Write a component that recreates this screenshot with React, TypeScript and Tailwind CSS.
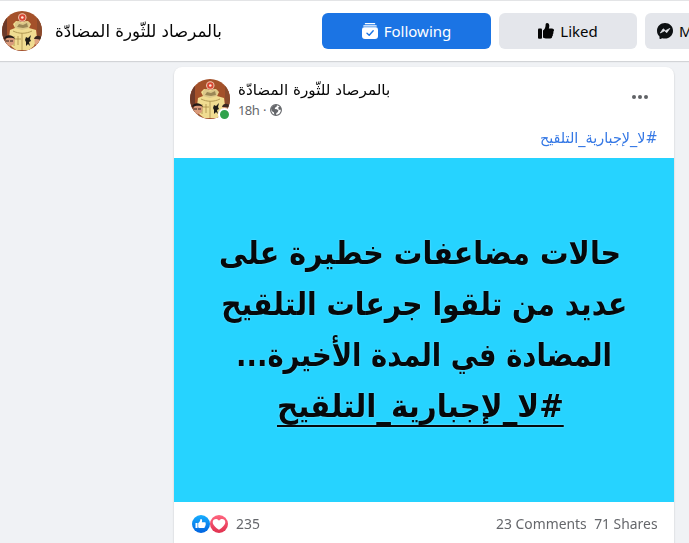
import React from 'react';

const PAGE = 'بالمرصاد للثّورة المضادّة';
const TAG = '#لا_لإجبارية_التلقيح';
const ARABIC = "font-['DejaVu_Sans',sans-serif]";

function Avatar({ id }: { id: string }) {
  return (
    <svg viewBox="0 0 40 40" className="block size-10 shrink-0">
      <defs>
        <clipPath id={id}>
          <circle cx="20" cy="20" r="20" />
        </clipPath>
      </defs>
      <g clipPath={`url(#${id})`}>
        <rect width="40" height="40" fill="#a4512a" />
        <rect width="5" height="40" fill="#6d3a29" />
        <rect x="35" width="5" height="40" fill="#8a4a2c" />
        <path d="M11 13l3-3 6 1 6-1 3 3-2 4 7 2 1 8-3 8-5 4H14l-5-4-2-8 1-8 5-2z" fill="#f0dc91" />
        <path d="M13 12l4-2 3 2 4-2 4 2-1 5-7 2-7-2z" fill="#dcc88a" />
        <path d="M15 16l2-3 4 1 4-2 1 4-5 1z" fill="#9a8756" />
        <path d="M11 20c6 3 13 3 19 0" fill="none" stroke="#b29a55" strokeWidth="1" />
        <path d="M20 22v17M12 25v10M16 25v9M11 28h8" stroke="#a88e4a" strokeWidth=".8" />
        <path d="M24 26l2 1 3-3-1 4 1 2-2 1 1 4-2-2-2 2v-4l-1-2z" fill="#1d1b17" />
        <circle cx="20.3" cy="6.5" r="4.2" fill="#f3c9b4" />
        <circle cx="20.3" cy="6.5" r="3.2" fill="#d94632" />
        <circle cx="20.3" cy="6.5" r="1.3" fill="#ffe9d9" />
        <ellipse cx="8" cy="30" rx="4.5" ry="5" fill="#d99a7a" />
        <path d="M2 28c1-5 9-5 11 0-4-2-7-1-11 0z" fill="#241a18" />
        <path d="M4 30h3m1 0h3" stroke="#352420" strokeWidth="1" />
        <path d="M2 34l6 2 6 4H4z" fill="#2c2525" />
        <ellipse cx="36" cy="30" rx="3.5" ry="5" fill="#e0a482" />
        <path d="M32 28c1-4 6-4 8-1v3c-3-2-5-2-8-2z" fill="#3a2720" />
        <path d="M30 40l3-5 6-1v6z" fill="#54291f" />
      </g>
    </svg>
  );
}

function FollowingIcon() {
  return (
    <svg viewBox="0 0 16 16" className="size-4 shrink-0" fill="none">
      <path d="M3.4.7h9.2" stroke="#fff" strokeWidth="1.3" strokeLinecap="round" />
      <path d="M1.800 2.900h12.400" stroke="#fff" strokeWidth="1.2" strokeLinecap="round" />
      <path d="M2.200 4.300h11.600Q16 4.300 16 6.500V13q0 3-3 3H3q-3 0-3-3V6.500Q0 4.300 2.200 4.300z" fill="#fff" />
      <path d="M5 10.200l2.200 2 4-4.400" stroke="#1b74e4" strokeWidth="1.4" strokeLinecap="round" strokeLinejoin="round" />
    </svg>
  );
}

function ThumbIcon({ className }: { className: string }) {
  return (
    <svg viewBox="0 0 16 16" className={className} fill="currentColor">
      <rect x="0" y="5.500" width="4" height="10.300" rx="1" />
      <path d="M5 7.500c1.800-1.400 2.500-3 2.600-5.600C7.600.7 8.200 0 9 0c1.500 0 2.300 1.200 2.300 2.800 0 1-.2 1.900-.5 2.700H14c1.100 0 2 .8 2 1.800 0 .7-.3 1.200-.8 1.500.5.900.3 1.800-.4 2.400.3.900 0 1.700-.7 2.200.1 1.200-.6 2-1.900 2H9c-1.600 0-2.800-.3-4-1z" />
    </svg>
  );
}

function MessengerIcon() {
  return (
    <svg viewBox="0 0 16 16" className="size-4 shrink-0">
      <path d="M8 0C3.500 0 0 3.300 0 7.700c0 2.300.9 4.300 2.500 5.700v1.900c0 .6.500.9 1 .6l1.700-.7c.9.200 1.800.3 2.800.3 4.500 0 8-3.300 8-7.800S12.500 0 8 0z" fill="#0d1012" />
      <path d="M3.300 10l2.900-4.200 2.300 1.900 4.300-2.300-3 4.300-2.300-1.900z" fill="#e4e6eb" stroke="#e4e6eb" strokeWidth=".7" strokeLinejoin="round" />
    </svg>
  );
}

function GlobeIcon() {
  return (
    <svg viewBox="0 0 12 12" className="size-3 shrink-0">
      <circle cx="6" cy="6" r="5.400" fill="#fff" stroke="#65676b" strokeWidth="1.100" />
      <path d="M1 4.200L3.300 1.400 6.700.8 7 2.200 5.300 3.600l-.6 1.500 2.200.2 1.600 1.300-.9 1.700-1.200.6-.5 2.300-1.700-.4-.2-2.300L1.700 7z" fill="#65676b" />
      <path d="M8.200 3.600l1.900-1.300 1.300 2.600-1.300 1.200-1.500-.7z" fill="#65676b" />
    </svg>
  );
}

function LikeReaction() {
  return (
    <svg viewBox="0 0 18 18" className="size-[18px] shrink-0">
      <defs>
        <linearGradient id="like" x2="0" y2="1">
          <stop stopColor="#18afff" />
          <stop offset="1" stopColor="#0062df" />
        </linearGradient>
      </defs>
      <circle cx="9" cy="9" r="9" fill="url(#like)" />
      <path d="M3.500 8h2v5h-2zM6.200 8C7.500 7.300 8.200 6.200 8.300 4.500c.1-.8 1.600-.7 1.800.8.100.7-.1 1.300-.3 2h3c1 0 1.300 1 .7 1.600.5.500.4 1.200-.2 1.500.3.600 0 1.100-.5 1.300.1.900-.4 1.300-1.300 1.300H9c-1.200 0-2-.2-2.800-.6z" fill="#fff" />
    </svg>
  );
}

function LoveReaction() {
  return (
    <svg viewBox="0 0 18 18" className="size-[18px] shrink-0">
      <defs>
        <linearGradient id="love" x2="0" y2="1">
          <stop stopColor="#ff6680" />
          <stop offset="1" stopColor="#e0314f" />
        </linearGradient>
      </defs>
      <circle cx="9" cy="9" r="9" fill="url(#love)" />
      <path d="M9 14.800C6 13 2.700 10.200 2.700 7.100c0-3.500 4.700-4.300 6.300-1.300 1.600-3 6.300-2.200 6.300 1.300 0 3.100-3.300 5.900-6.300 7.700z" fill="#fff" />
    </svg>
  );
}

export default function App() {
  return (
    <div className="h-[543px] w-[689px] overflow-hidden bg-[#f0f2f5] font-['Noto_Sans','Open_Sans',sans-serif] text-[#050505]">
      <header className="flex h-[61px] items-center border-t border-[#e3e4e6] bg-white pl-0.5 shadow-[0_1px_1px_rgba(0,0,0,0.12)]">
        <Avatar id="top-avatar" />
        <div className="ml-[13px] w-[267px] shrink-0 pt-0.5">
          <span dir="rtl" className={`${ARABIC} inline-block origin-left scale-x-[0.98] whitespace-nowrap text-[17px]`}>{PAGE}</span>
        </div>
        <button className="flex h-9 w-[169px] shrink-0 items-center justify-center gap-1.5 rounded-md bg-[#1b74e4] text-[15px] text-white">
          <FollowingIcon />
          <span>Following</span>
        </button>
        <button className="ml-2 flex h-9 w-[138px] shrink-0 items-center justify-center gap-1.5 rounded-md bg-[#e4e6eb] text-[15px]">
          <ThumbIcon className="size-4 shrink-0" />
          <span>Liked</span>
        </button>
        <button className="ml-2 flex h-9 w-[130px] shrink-0 items-center gap-1.5 rounded-md bg-[#e4e6eb] pl-3 text-[15px]">
          <MessengerIcon />
          <span>Message</span>
        </button>
      </header>

      <article className="ml-[174px] mt-1.5 h-[490px] w-[500px] rounded-t-lg bg-white shadow-[0_1px_2px_rgba(0,0,0,0.2)]">
        <div className="flex h-[52px] items-start pl-4 pt-3">
          <div className="relative">
            <Avatar id="post-avatar" />
            <span className="absolute -bottom-0.5 -right-px size-[13px] rounded-full border-2 border-white bg-[#31a24c]" />
          </div>
          <div className="ml-2 w-[394px]">
            <div className="h-[22px] leading-[20px]">
              <span dir="rtl" className={`${ARABIC} inline-block origin-left scale-x-[1.013] whitespace-nowrap text-[15px]`}>{PAGE}</span>
            </div>
            <div className="flex h-[18px] items-center gap-1 text-[13px] leading-4 tracking-[-0.6px] text-[#65676b]">
              <span>18h</span>
              <span>·</span>
              <GlobeIcon />
            </div>
          </div>
          <svg viewBox="0 0 16 4" className="mt-4 h-1 w-4 shrink-0" fill="#606266">
            <circle cx="2" cy="2" r="2" />
            <circle cx="8" cy="2" r="2" />
            <circle cx="14" cy="2" r="2" />
          </svg>
        </div>
        <div dir="rtl" className="h-[39px] pr-4 pt-1.5 text-[#3578e5]">
          <span className={`${ARABIC} inline-block origin-right scale-x-[0.96] whitespace-nowrap text-[15px]`}>{TAG}</span>
        </div>
        <div dir="rtl" className={`${ARABIC} flex h-[344px] flex-col items-center bg-[#26d3ff] pt-[70px] text-[32px] font-bold leading-[51px] text-[#06090b] text-shadow-[0_0_2px_rgba(255,255,255,0.4)]`}>
          <span className="mr-[7px] scale-x-[0.893] whitespace-nowrap">حالات مضاعفات خطيرة على</span>
          <span className="scale-x-[0.882] whitespace-nowrap">عديد من تلقوا جرعات التلقيح</span>
          <span className="scale-x-[0.858] whitespace-nowrap">المضادة في المدة الأخيرة...</span>
          <span className="mr-[8px] scale-x-[0.917] whitespace-nowrap underline decoration-2 underline-offset-[8px] [text-decoration-skip-ink:none]">{TAG}</span>
        </div>
        <div className="flex h-[43px] items-center pl-[18px] pr-4 text-[15px] text-[#65676b]">
          <LikeReaction />
          <LoveReaction />
          <span className="ml-2 origin-left scale-x-[0.93]">235</span>
          <div className="ml-auto flex origin-right scale-x-[0.925] gap-2">
            <span>23 Comments</span>
            <span>71 Shares</span>
          </div>
        </div>
      </article>
    </div>
  );
}
